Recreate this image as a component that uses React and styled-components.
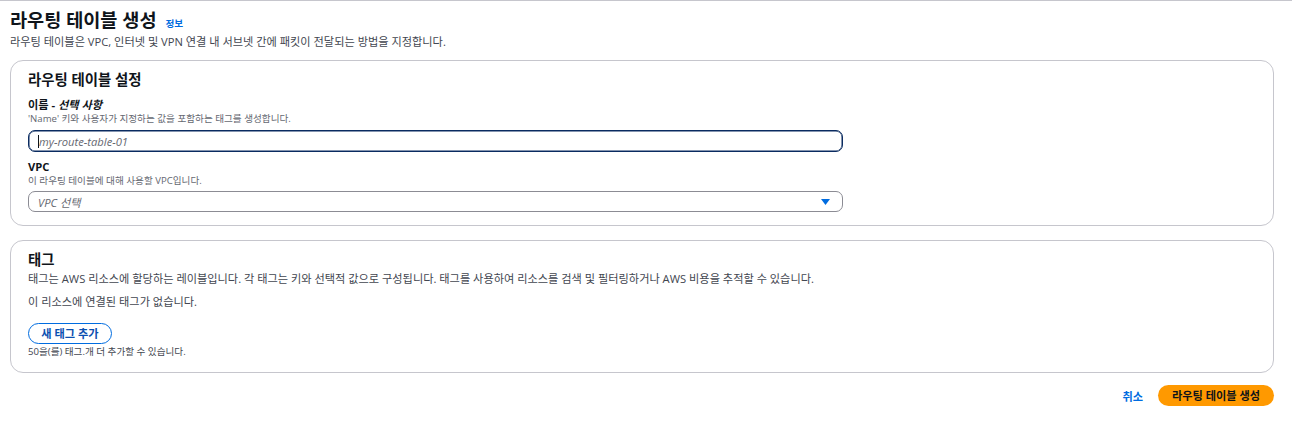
import styled, { createGlobalStyle } from 'styled-components';

const GlobalStyle = createGlobalStyle`
  html, body {
    margin: 0;
    padding: 0;
    background: #ffffff;
  }
  body {
    font-family: "Open Sans", "Noto Sans CJK KR", sans-serif;
    color: #0f141a;
  }
`;

const Page = styled.main`
  border-top: 1px solid #c6c6cd;
  padding: 7px 18px 0 10px;
  display: flex;
  flex-direction: column;
`;

const Header = styled.header`
  display: flex;
  flex-direction: column;
  gap: 2px;
  margin-bottom: 10px;
`;

const TitleRow = styled.div`
  display: flex;
  align-items: baseline;
  gap: 9px;
`;

const Title = styled.h1`
  margin: 0;
  font-size: 18.6px;
  font-weight: 700;
  line-height: 24px;
`;

const InfoLink = styled.a`
  font-size: 9.6px;
  font-weight: 700;
  color: #006ce0;
  text-decoration: none;
`;

const Subtitle = styled.p`
  margin: 0;
  font-size: 11.2px;
  line-height: 16px;
  color: #424650;
`;

const Container = styled.section`
  border: 1px solid #c6c6cd;
  border-radius: 13px;
  padding: 10px 17px ${({ $bottom }) => $bottom}px;
  display: flex;
  flex-direction: column;
  margin-bottom: ${({ $gap }) => $gap}px;
`;

const SectionTitle = styled.h2`
  margin: 0 0 ${({ $gap }) => $gap}px;
  font-size: 14.4px;
  font-weight: 700;
  line-height: 18px;
`;

const Field = styled.div`
  display: flex;
  flex-direction: column;
  width: 815px;
  margin-bottom: ${({ $gap }) => $gap || 0}px;
`;

const Label = styled.label`
  font-size: 11.2px;
  font-weight: 700;
  line-height: 16px;

  em {
    font-style: italic;
  }
`;

const Hint = styled.span`
  font-size: 9.6px;
  line-height: 11px;
  color: #656871;
  margin-bottom: ${({ $gap }) => $gap || 0}px;
`;

const TextInput = styled.div`
  box-sizing: border-box;
  height: ${({ $height }) => $height}px;
  border: 1px solid ${({ $focused }) => ($focused ? '#0a2b60' : '#8c8c94')};
  box-shadow: ${({ $focused }) => ($focused ? 'inset 0 0 0 0.5px #0a2b60' : 'none')};
  border-radius: 7px;
  padding: 0 9px;
  display: flex;
  align-items: center;
  justify-content: space-between;
`;

const Placeholder = styled.span`
  font-size: 11.2px;
  font-style: italic;
  color: #656871;
  display: flex;
  align-items: center;
`;

const Caret = styled.i`
  display: inline-block;
  width: 1px;
  height: 13px;
  background: #0f141a;
`;

const Arrow = styled.svg`
  width: 9px;
  height: 6px;
  margin-right: 3px;
`;

const Body = styled.p`
  margin: 0 0 ${({ $gap }) => $gap || 0}px;
  font-size: 11.2px;
  line-height: 16px;
  color: #424650;
`;

const OutlineButton = styled.button`
  align-self: flex-start;
  height: 21px;
  width: 84px;
  box-sizing: border-box;
  padding: 0;
  border: 1.5px solid #006ce0;
  border-radius: 20px;
  background: #fff;
  color: #0a4fb0;
  font-family: inherit;
  font-size: 11.2px;
  font-weight: 700;
  line-height: 1;
`;

const SmallNote = styled.span`
  margin-top: 2px;
  font-size: 9.6px;
  line-height: 12px;
  color: #424650;
`;

const Actions = styled.footer`
  display: flex;
  justify-content: flex-end;
  align-items: center;
  gap: 15px;
`;

const TextButton = styled.button`
  border: 0;
  background: none;
  padding: 0;
  color: #006ce0;
  font-family: inherit;
  font-size: 11.2px;
  font-weight: 700;
`;

const PrimaryButton = styled.button`
  height: 21px;
  width: 116px;
  padding: 0;
  border: 0;
  border-radius: 20px;
  background: #ff9900;
  color: #0f141a;
  font-family: inherit;
  font-size: 11.2px;
  font-weight: 700;
  line-height: 1;
`;

export default function App() {
  return (
    <>
      <GlobalStyle />
      <Page>
        <Header>
          <TitleRow>
            <Title>라우팅 테이블 생성</Title>
            <InfoLink href="#">정보</InfoLink>
          </TitleRow>
          <Subtitle>라우팅 테이블은 VPC, 인터넷 및 VPN 연결 내 서브넷 간에 패킷이 전달되는 방법을 지정합니다.</Subtitle>
        </Header>

        <Container $gap={14} $bottom={13}>
          <SectionTitle $gap={8}>라우팅 테이블 설정</SectionTitle>
          <Field $gap={7}>
            <Label>
              이름 - <em>선택 사항</em>
            </Label>
            <Hint $gap={6}>'Name' 키와 사용자가 지정하는 값을 포함하는 태그를 생성합니다.</Hint>
            <TextInput $focused $height={22}>
              <Placeholder>
                <Caret />
                my-route-table-01
              </Placeholder>
            </TextInput>
          </Field>
          <Field>
            <Label>VPC</Label>
            <Hint $gap={5}>이 라우팅 테이블에 대해 사용할 VPC입니다.</Hint>
            <TextInput $height={21}>
              <Placeholder>VPC 선택</Placeholder>
              <Arrow viewBox="0 0 9 6">
                <path d="M0 0h9L4.5 6z" fill="#006ce0" />
              </Arrow>
            </TextInput>
          </Field>
        </Container>

        <Container $gap={12} $bottom={14}>
          <SectionTitle $gap={2}>태그</SectionTitle>
          <Body $gap={7}>
            태그는 AWS 리소스에 할당하는 레이블입니다. 각 태그는 키와 선택적 값으로 구성됩니다. 태그를 사용하여 리소스를 검색 및 필터링하거나 AWS 비용을 추적할 수 있습니다.
          </Body>
          <Body $gap={13}>이 리소스에 연결된 태그가 없습니다.</Body>
          <OutlineButton>새 태그 추가</OutlineButton>
          <SmallNote>50을(를) 태그.개 더 추가할 수 있습니다.</SmallNote>
        </Container>

        <Actions>
          <TextButton>취소</TextButton>
          <PrimaryButton>라우팅 테이블 생성</PrimaryButton>
        </Actions>
      </Page>
    </>
  );
}
